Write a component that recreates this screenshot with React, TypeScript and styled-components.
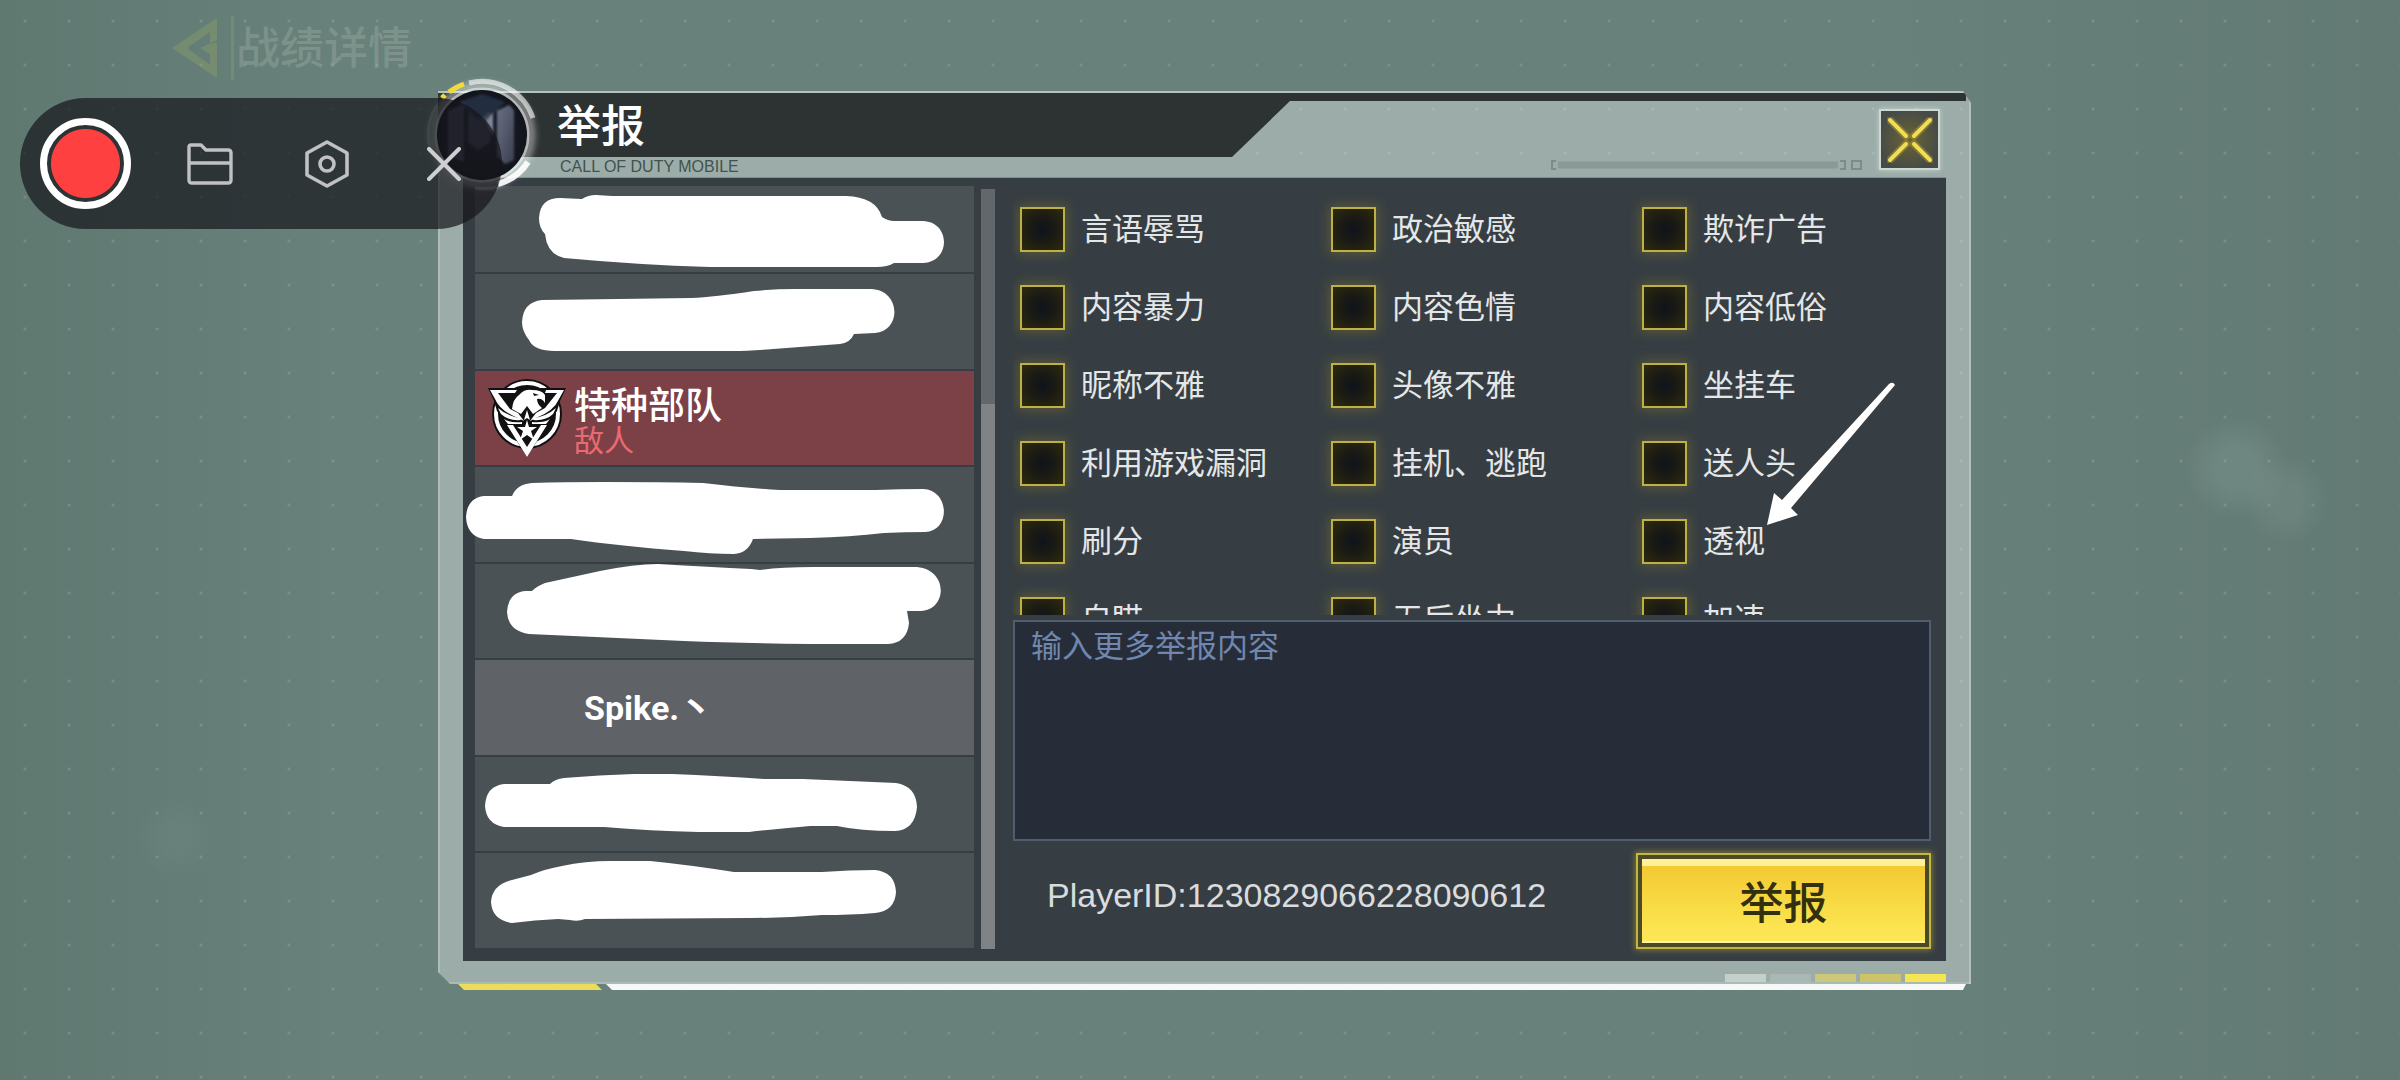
import React from "react";
import styled, { createGlobalStyle } from "styled-components";

const sans = `"Liberation Sans", "Noto Sans CJK SC", sans-serif`;
const cjk = `"Noto Sans CJK SC", sans-serif`;

const GlobalStyle = createGlobalStyle`
  *, *::before, *::after { box-sizing: border-box; }
  body { margin: 0; background: #647c76; }
  button, input, textarea { font: inherit; }
`;

const Page = styled.main`
  position: relative;
  min-height: 100vh;
  padding: 91px 429px 90px 438px;
  overflow: hidden;
  font-family: ${sans};
  background:
    radial-gradient(circle 2px, rgba(190, 215, 205, 0.2) 1px, transparent 2px) 3px -1px / 44px 44px,
    radial-gradient(circle at 2236px 468px, rgba(150, 178, 168, 0.2) 20px, transparent 52px),
    radial-gradient(circle at 2286px 500px, rgba(150, 178, 168, 0.14) 16px, transparent 44px),
    radial-gradient(circle at 175px 838px, rgba(150, 178, 168, 0.08) 14px, transparent 40px),
    linear-gradient(90deg, #5f7971 0, #68817b 14%, #68817b 78%, #637a74 100%);
`;

const BackLink = styled.a`
  position: absolute;
  top: 16px;
  left: 170px;
  display: flex;
  align-items: center;
  gap: 2px;
  color: rgba(160, 176, 166, 0.4);
  font: 500 44px/64px ${cjk};
  text-decoration: none;
`;

const BackLabel = styled.span`
  padding-bottom: 6px;
  line-height: 58px;
`;

const Recorder = styled.div`
  position: absolute;
  z-index: 3;
  top: 98px;
  left: 20px;
  display: flex;
  align-items: center;
  gap: 54px;
  width: 482px;
  height: 131px;
  padding-left: 20px;
  border-radius: 66px;
  background: rgba(21, 21, 27, 0.7);
`;

const RecordButton = styled.button`
  width: 91px;
  height: 91px;
  padding: 0;
  border: 7px solid #fff;
  border-radius: 50%;
  background: radial-gradient(circle, #ff4040 34px, transparent 35px);
`;

const RecorderTools = styled.div`
  display: flex;
  gap: 67px;
`;

const ToolButton = styled.button`
  display: grid;
  place-items: center;
  width: 50px;
  height: 50px;
  padding: 0;
  border: 0;
  background: none;
`;

const Dialog = styled.section`
  position: relative;
`;

const Frame = styled.div`
  padding-bottom: 23px;
  background: rgba(255, 255, 255, 0.35);
  box-shadow: inset -2px 0 rgba(215, 228, 223, 0.4), inset 2px 0 rgba(215, 228, 223, 0.3), inset 0 -2px rgba(190, 208, 202, 0.4);
  clip-path: polygon(0 0, calc(100% - 8px) 0, 100% 12px, 100% 100%, 12px 100%, 0 calc(100% - 12px));
`;

const Header = styled.header`
  border-top: 2px solid #b4c1bd;
`;

const HeaderRail = styled.div`
  height: 8px;
  margin-right: 5px;
  background: #2d3232;
`;

const HeaderRow = styled.div`
  display: flex;
  justify-content: space-between;
  height: 76px;
  padding-right: 31px;
`;

const TitleBlock = styled.div`
  display: flex;
  flex-direction: column;
  width: 852px;
`;

const Title = styled.h1`
  height: 57px;
  margin: 0;
  padding-left: 119px;
  background: #2d3232;
  clip-path: polygon(0 0, 100% 0, 794px 100%, 0 100%);
  color: #fff;
  font: 500 44px/44px ${cjk};
`;

const Subtitle = styled.p`
  margin: 0;
  padding-left: 122px;
  color: #43524f;
  font: 16px/20px ${sans};
`;

const HeaderTools = styled.div`
  display: flex;
  align-items: flex-end;
  gap: 17px;
`;

const CloseButton = styled.button`
  display: grid;
  place-items: center;
  width: 61px;
  height: 61px;
  margin-bottom: 7px;
  padding: 0;
  border: 2px solid #cdd8d3;
  background: radial-gradient(circle, #6a6433, #464b47 75%);
  box-shadow: 0 0 5px rgba(235, 245, 240, 0.5);
`;

const Panel = styled.div`
  position: relative;
  display: grid;
  grid-template-columns: 520fr 918fr;
  gap: 18px;
  margin: 0 25px;
  padding: 0 15px 0 12px;
  border-top: 1px solid #80908c;
  background: #373e43;
`;

const Side = styled.div`
  position: relative;
  display: flex;
  gap: 7px;
  padding: 8px 0 12px;
`;

const PlayerList = styled.ul`
  display: grid;
  flex: 1;
  grid-template-rows: 86px repeat(7, 1fr);
  gap: 2px;
  margin: 0;
  padding: 0 0 1px;
  list-style: none;
`;

const rowColors = { plain: "#4b5256", enemy: "#7b4146", picked: "#5f6367" };

const PlayerRow = styled.li<{ $kind: keyof typeof rowColors }>`
  display: flex;
  align-items: center;
  gap: 8px;
  padding: 0 13px;
  background: ${(p) => rowColors[p.$kind]};
`;

const PlayerText = styled.div`
  display: flex;
  flex-direction: column;
`;

const PlayerName = styled.strong`
  color: #fff;
  font: 500 37px/40px ${cjk};
`;

const PlayerSide = styled.span`
  color: #ea6a72;
  font: 30px/30px ${cjk};
`;

const PickedName = styled.strong`
  padding-left: 96px;
  color: #fff;
  font: bold 34px/50px Roboto, ${sans};
`;

const ScrollTrack = styled.div`
  width: 14px;
  margin-top: 3px;
  padding-top: 215px;
  background: #61676a;
`;

const ScrollThumb = styled.div`
  height: 100%;
  background: #7f8385;
`;

const Form = styled.form`
  display: flex;
  flex-direction: column;
  padding-bottom: 12px;
`;

const Reasons = styled.fieldset`
  display: grid;
  grid-template-columns: 1fr 1fr 289px;
  grid-auto-rows: 45px;
  gap: 33px 0;
  height: 437px;
  min-width: 0;
  margin: 0;
  padding: 29px 0 0 7px;
  border: 0;
  overflow: hidden;
`;

const Reason = styled.label`
  display: flex;
  align-items: flex-start;
  gap: 16px;
  color: #e4e7e8;
  font: 31px/40px ${cjk};
  white-space: nowrap;
`;

const Tick = styled.input`
  appearance: none;
  width: 45px;
  height: 45px;
  margin: 0;
  border: 2px solid #bdb045;
  background: radial-gradient(circle, #11141a 8%, #1b1b14 45%, #2e2b0e 100%);
  box-shadow: 0 0 11px 2px rgba(150, 135, 30, 0.36);
  &:checked { background: #e5cf3a; }
`;

const Details = styled.textarea`
  display: block;
  width: 100%;
  height: 221px;
  margin-top: 5px;
  padding: 0 16px;
  border: 2px solid #505d6c;
  background: #272d38;
  color: #dfe5ea;
  font: 31px/44px ${cjk};
  resize: none;
  &::placeholder { color: #7087b0; opacity: 1; }
`;

const Footer = styled.div`
  display: flex;
  align-items: center;
  justify-content: space-between;
  margin-top: 12px;
  padding-left: 34px;
`;

const PlayerId = styled.output`
  padding-bottom: 12px;
  color: #d9dcde;
  font: 34px/40px ${sans};
`;

const SubmitButton = styled.button`
  width: 295px;
  height: 96px;
  padding: 4px;
  border: 2px solid #c3b649;
  background: #4c4a23;
  box-shadow: 0 0 6px 1px rgba(190, 170, 40, 0.55);
`;

const SubmitFace = styled.span`
  display: grid;
  place-items: center;
  height: 100%;
  padding-bottom: 8px;
  border-top: 7px solid #fff09a;
  border-bottom: 2px solid #fff3a8;
  background: linear-gradient(#f3c932, #fbe44f 80%, #fbe658);
  color: #33300f;
  font: 500 44px/50px ${cjk};
`;

const Segments = styled.div`
  position: absolute;
  right: 25px;
  bottom: 2px;
  display: flex;
  gap: 4px;
`;

const Segment = styled.i<{ $tone: string }>`
  width: 41px;
  height: 8px;
  background: ${(p) => p.$tone};
`;

const Underline = styled.div`
  display: flex;
  gap: 4px;
  height: 6px;
  margin: 0 5px 0 20px;
`;

const YellowLine = styled.div`
  width: 144px;
  background: #ecdc57;
  clip-path: polygon(0 0, 138px 0, 100% 100%, 6px 100%);
`;

const WhiteLine = styled.div`
  flex: 1;
  background: #f6f9f8;
  clip-path: polygon(0 0, 100% 0, calc(100% - 3px) 100%, 6px 100%);
`;

const FrameBody = styled.div`
  position: relative;
`;

const Avatar = styled.svg`
  position: absolute;
  z-index: 2;
  top: -21px;
  left: -21px;
  overflow: visible;
`;

const Marks = styled.svg`
  position: absolute;
  z-index: 1;
  top: 9px;
  left: 0;
  overflow: visible;
  pointer-events: none;
`;

const Arrow = styled.svg`
  position: absolute;
  z-index: 1;
  top: 204px;
  right: 50px;
  pointer-events: none;
`;

const Rail = styled.svg`
  margin-bottom: 6px;
`;

const scribbles = [
  "M539 218Q540 198 560 198L582 199Q588 195 596 195L612 196H846Q876 197 882 217Q888 221 894 221H923C951 222 951 262 923 263H894Q888 267 876 267H710Q640 265 564 258Q547 254 545 234Q539 228 539 218Z",
  "M522 322Q523 302 542 300Q620 299 691 298Q715 297 754 291Q775 289 795 289H871C901 290 902 331 875 333L854 334Q850 343 840 344L773 349Q750 351 732 351H555Q534 351 529 340Q522 331 522 322Z",
  "M466 517Q467 498 484 496H512Q517 484 532 483Q565 482 603 482Q660 482 703 483Q745 488 780 490H876Q900 489 923 489C950 490 951 531 925 532Q905 532 884 533Q850 537 810 538L753 539Q748 553 734 554Q710 554 684 551Q620 546 571 539H484Q467 536 466 517Z",
  "M507 612Q508 593 525 591H532Q537 586 545 583L600 571Q635 564 658 564Q710 567 751 569L760 570Q780 567 814 567H917C949 570 947 610 921 611H907L909 623Q907 643 888 644H810Q740 643 684 641L529 634Q508 631 507 612Z",
  "M485 806Q486 786 504 784H550Q555 779 564 778Q600 775 634 774H672Q720 776 764 779H803Q850 781 896 783Q916 786 917 807Q915 830 895 831Q860 831 837 826H810Q785 828 749 832H699Q650 831 604 827H504Q486 824 485 806Z",
  "M491 902Q492 885 512 880L531 875Q545 869 562 866Q585 861 611 861H650Q690 865 734 872H822Q850 870 875 870Q895 872 896 892Q895 911 875 913Q850 915 822 915Q785 918 749 918L585 919Q578 922 570 920L558 919Q535 920 512 923Q492 920 491 902Z",
];

const reasons = [
  "言语辱骂", "政治敏感", "欺诈广告",
  "内容暴力", "内容色情", "内容低俗",
  "昵称不雅", "头像不雅", "坐挂车",
  "利用游戏漏洞", "挂机、逃跑", "送人头",
  "刷分", "演员", "透视",
  "自瞄", "无后坐力", "加速",
];

const segmentTones = ["#c2cfcb", "#a9b8b4", "#cdc779", "#cdc46a", "#f6e552"];

const BackIcon = () => (
  <svg width="64" height="64" viewBox="0 0 64 64" aria-hidden="true">
    <path d="M47 2V26L40 28V16L17 32L40 49V38L30 32L47 24V62L2 32Z" fill="#96a565" opacity=".35" fillRule="evenodd" />
    <path d="M61 0H64V64H61Z" fill="#96a565" opacity=".35" />
  </svg>
);

const FolderIcon = () => (
  <svg width="46" height="42" viewBox="0 0 46 42" fill="none" stroke="#bfc1c2" strokeWidth="3.4" strokeLinejoin="round" aria-hidden="true">
    <path d="M2 4Q2 2 4 2H14L19 7H41Q44 7 44 10V37Q44 40 41 40H5Q2 40 2 37ZM2 20H44" />
  </svg>
);

const HexIcon = () => (
  <svg width="46" height="50" viewBox="0 0 46 50" fill="none" stroke="#bfc1c2" strokeWidth="3.6" strokeLinejoin="round" aria-hidden="true">
    <path d="M23 3L43 14V36L23 47L3 36V14Z" />
    <circle cx="23" cy="25" r="7" />
  </svg>
);

const CrossIcon = () => (
  <svg width="34" height="34" viewBox="0 0 34 34" stroke="#cdcfd0" strokeWidth="4" strokeLinecap="round" aria-hidden="true">
    <path d="M2 2L32 32M32 2L2 32" />
  </svg>
);

const CloseIcon = () => (
  <svg width="46" height="46" viewBox="0 0 46 46" strokeLinecap="round" aria-hidden="true">
    <g stroke="#d6b92c" strokeOpacity=".3" strokeWidth="8">
      <path d="M3 3L19 19M43 3L27 19M3 43L19 27M43 43L27 27" />
    </g>
    <g stroke="#f1dd54" strokeWidth="4">
      <path d="M3 3L19 19M43 3L27 19M3 43L19 27M43 43L27 27" />
    </g>
  </svg>
);

const RailIcon = () => (
  <Rail width="312" height="12" viewBox="0 0 312 12" fill="none" stroke="#7d8c88" strokeWidth="2" aria-hidden="true">
    <path d="M6 2H2V10H6M290 2H295V10H290M302 2H311V10H302Z" />
    <path d="M8 6H288" stroke="#8b9a96" strokeWidth="7" />
  </Rail>
);

const Emblem = () => (
  <svg width="78" height="80" viewBox="0 0 78 80" aria-hidden="true">
    <circle cx="39" cy="36" r="35" fill="#111" />
    <circle cx="39" cy="36" r="31" fill="#111" stroke="#fff" strokeWidth="4" />
    <path d="M0 10H78L72 23L69 33L60 46L39 79L18 46L9 33L6 23Z" fill="#111" />
    {/* wings and their top bars */}
    <path d="M2 12H29L27 15H10L22 31L30 35L36 43L30 40Q12 33 7 21Z" fill="#fff" />
    <path d="M76 12H58L57 15H69L57 30L48 35L42 43L48 40Q66 33 71 21Z" fill="#fff" />
    <path d="M10 30Q19 38 32 40L33 42Q20 43 13 36ZM68 30Q59 38 46 40L45 42Q58 43 65 36Z" fill="#fff" />
    <path d="M16 41Q22 45 34 44V46H20ZM62 41Q56 45 44 44V46H58Z" fill="#fff" />
    {/* eagle head */}
    <path d="M24 31Q25 21 31 17Q36 11 44 12Q54 12 57 17L57 25Q54 20 49 21Q49 26 54 30L45 36L39 28L33 36Z" fill="#fff" />
    <path d="M45 15L51 17L46 18Z" fill="#111" />
    {/* lower chevron and star */}
    <path d="M19 47H25L39 69L53 47H59L39 79Z" fill="#fff" />
    <path d="M39 32L42 42L39 40L36 42Z" fill="#fff" />
    <path d="M39 42L41 49H49L43 53L46 62L39 57L32 62L35 53L29 49H37Z" fill="#fff" />
  </svg>
);

const AvatarBadge = () => (
  <Avatar width="130" height="130" viewBox="0 0 130 130" aria-hidden="true">
    <defs>
      <radialGradient id="orb"><stop offset="0" stopColor="#20242f" /><stop offset="1" stopColor="#12141c" /></radialGradient>
      <linearGradient id="facet" x1="0" y1="0" x2="1" y2="1"><stop offset="0" stopColor="#6b7184" /><stop offset="1" stopColor="#3a3f50" /></linearGradient>
      <filter id="glow" x="-20%" y="-20%" width="140%" height="140%"><feGaussianBlur stdDeviation="3" /></filter>
      <filter id="soft" x="-20%" y="-20%" width="140%" height="140%"><feGaussianBlur stdDeviation="1" /></filter>
    </defs>
    <g fill="none" stroke="#fff">
      <circle cx="65" cy="65" r="49" strokeWidth="8" opacity=".45" filter="url(#glow)" />
      <circle cx="65" cy="65" r="46" strokeWidth="3" opacity=".5" />
      <path d="M52 13A54 54 0 0 1 116 48" strokeWidth="5" opacity=".6" />
      <path d="M111 92A53 53 0 0 1 81 114" strokeWidth="6" opacity=".9" />
      <path d="M81 117A54 54 0 0 1 58 118M13 78A54 54 0 0 1 20 35" strokeWidth="3" opacity=".3" />
      <path d="M32 22A54 54 0 0 1 47 14M25 28L28 25" stroke="#f2da3c" strokeWidth="5" />
    </g>
    <circle cx="65" cy="65" r="45" fill="url(#orb)" />
    <g filter="url(#soft)">
      <path d="M42 32L65 24L88 32L71 50H58Z" fill="#222d40" />
      <path d="M31 41L47 34V92L31 86ZM51 42L62 50L73 42V72L62 80L51 72Z" fill="#3e4353" />
      <path d="M80 41L92 35L97 40V90L88 94L80 86Z" fill="url(#facet)" />
      <path d="M69 51L76 43V66Z" fill="#7f8699" />
    </g>
  </Avatar>
);

export default function App() {
  return (
    <Page>
      <GlobalStyle />
      <BackLink href="#back"><BackIcon /><BackLabel>战绩详情</BackLabel></BackLink>

      <Recorder>
        <RecordButton aria-label="录制" />
        <RecorderTools>
          <ToolButton aria-label="文件夹"><FolderIcon /></ToolButton>
          <ToolButton aria-label="设置"><HexIcon /></ToolButton>
          <ToolButton aria-label="关闭"><CrossIcon /></ToolButton>
        </RecorderTools>
      </Recorder>

      <Dialog aria-labelledby="report-title">
        <AvatarBadge />
        <FrameBody>
          <Frame>
            <Header>
              <HeaderRail />
              <HeaderRow>
                <TitleBlock>
                  <Title id="report-title">举报</Title>
                  <Subtitle>CALL OF DUTY MOBILE</Subtitle>
                </TitleBlock>
                <HeaderTools>
                  <RailIcon />
                  <CloseButton aria-label="关闭举报"><CloseIcon /></CloseButton>
                </HeaderTools>
              </HeaderRow>
            </Header>
            <Panel>
              <Side>
                <PlayerList>
                  <PlayerRow $kind="plain" />
                  <PlayerRow $kind="plain" />
                  <PlayerRow $kind="enemy">
                    <Emblem />
                    <PlayerText>
                      <PlayerName>特种部队</PlayerName>
                      <PlayerSide>敌人</PlayerSide>
                    </PlayerText>
                  </PlayerRow>
                  <PlayerRow $kind="plain" />
                  <PlayerRow $kind="plain" />
                  <PlayerRow $kind="picked">
                    <PickedName>Spike.丶</PickedName>
                  </PlayerRow>
                  <PlayerRow $kind="plain" />
                  <PlayerRow $kind="plain" />
                </PlayerList>
                <ScrollTrack><ScrollThumb /></ScrollTrack>
                <Marks width="499" height="761" viewBox="475 187 499 761" fill="#fff" aria-hidden="true">
                  {scribbles.map((d) => <path key={d} d={d} />)}
                </Marks>
              </Side>
              <Form onSubmit={(e) => e.preventDefault()}>
                <Reasons aria-label="举报原因">
                  {reasons.map((reason) => (
                    <Reason key={reason}>
                      <Tick type="checkbox" name="reason" value={reason} />
                      {reason}
                    </Reason>
                  ))}
                </Reasons>
                <Details aria-label="举报内容" placeholder="输入更多举报内容" />
                <Footer>
                  <PlayerId>PlayerID:1230829066228090612</PlayerId>
                  <SubmitButton type="submit"><SubmitFace>举报</SubmitFace></SubmitButton>
                </Footer>
              </Form>
              <Arrow width="130" height="144" viewBox="1767 381 130 144" fill="#fff" aria-hidden="true">
                <path d="M1768 524L1775 492L1783 499L1890 383Q1894 380 1896 384L1792 507L1799 514Z" />
              </Arrow>
            </Panel>
          </Frame>
          <Segments aria-hidden="true">
            {segmentTones.map((tone) => <Segment key={tone} $tone={tone} />)}
          </Segments>
        </FrameBody>
        <Underline>
          <YellowLine />
          <WhiteLine />
        </Underline>
      </Dialog>
    </Page>
  );
}
